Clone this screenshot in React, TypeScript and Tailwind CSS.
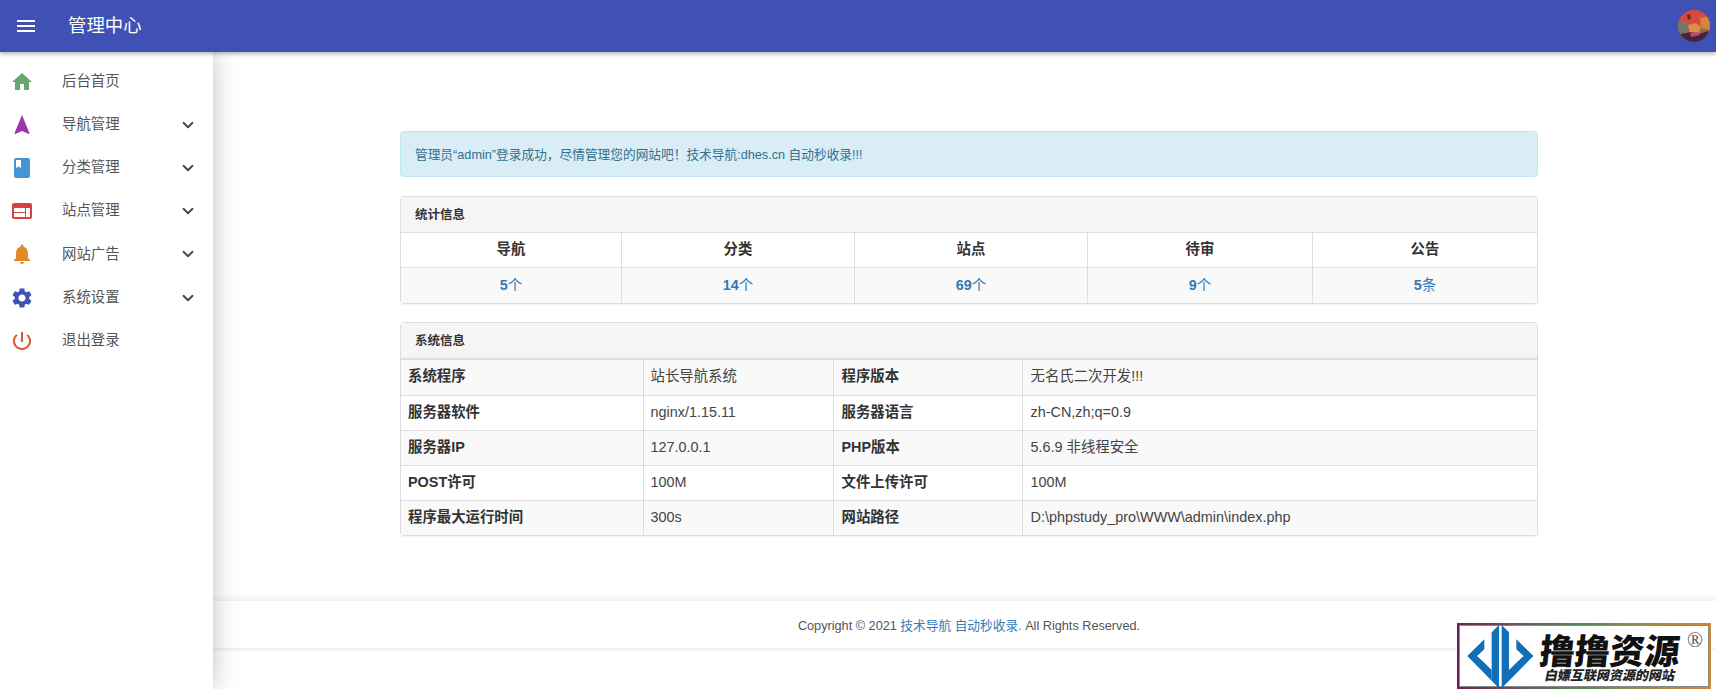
import { ChevronDown } from 'lucide-react';

const fontStack = "font-['Liberation_Sans','Noto_Sans_CJK_SC',sans-serif]";

const MdIcon = ({ d, color }: { d: string; color: string }) => (
  <svg viewBox="0 0 24 24" className="w-6 h-6" fill={color}>
    <path d={d} />
  </svg>
);

const navItems = [
  { label: '后台首页', color: '#66a86c', d: 'M10 20v-6h4v6h5v-8h3L12 3 2 12h3v8z' },
  { label: '导航管理', color: '#9c36ac', more: true, d: 'M12 2L4.5 20.29l.71.71L12 18l6.79 3 .71-.71z' },
  {
    label: '分类管理',
    color: '#4396d6',
    more: true,
    d: 'M18 2H6c-1.1 0-2 .9-2 2v16c0 1.1.9 2 2 2h12c1.1 0 2-.9 2-2V4c0-1.1-.9-2-2-2zM6 4h5v8l-2.5-1.5L6 12V4z',
  },
  {
    label: '站点管理',
    color: '#db3f3f',
    more: true,
    d: 'M20 4H4c-1.1 0-1.99.9-1.99 2L2 18c0 1.1.9 2 2 2h16c1.1 0 2-.9 2-2V6c0-1.1-.9-2-2-2zm-5 14H4v-4h11v4zm0-5H4V9h11v4zm5 5h-4V9h4v9z',
  },
  {
    label: '网站广告',
    color: '#e38a24',
    more: true,
    d: 'M12 22c1.1 0 2-.9 2-2h-4c0 1.1.89 2 2 2zm6-6v-5c0-3.07-1.64-5.64-4.5-6.32V4c0-.83-.67-1.5-1.5-1.5s-1.5.67-1.5 1.5v.68C7.63 5.36 6 7.92 6 11v5l-2 2v1h16v-1l-2-2z',
  },
  {
    label: '系统设置',
    color: '#3f51b5',
    more: true,
    d: 'M19.14 12.94c.04-.3.06-.61.06-.94 0-.32-.02-.64-.07-.94l2.03-1.58c.18-.14.23-.41.12-.61l-1.92-3.32c-.12-.22-.37-.29-.59-.22l-2.39.96c-.5-.38-1.03-.7-1.62-.94l-.36-2.54c-.04-.24-.24-.41-.48-.41h-3.84c-.24 0-.43.17-.47.41l-.36 2.54c-.59.24-1.13.57-1.62.94l-2.39-.96c-.22-.08-.47 0-.59.22L2.74 8.87c-.12.21-.08.47.12.61l2.03 1.58c-.05.3-.09.63-.09.94s.02.64.07.94l-2.03 1.58c-.18.14-.23.41-.12.61l1.92 3.32c.12.22.37.29.59.22l2.39-.96c.5.38 1.03.7 1.62.94l.36 2.54c.05.24.24.41.48.41h3.84c.24 0 .44-.17.47-.41l.36-2.54c.59-.24 1.13-.56 1.62-.94l2.39.96c.22.08.47 0 .59-.22l1.92-3.32c.12-.22.07-.47-.12-.61l-2.01-1.58zM12 15.6c-1.98 0-3.6-1.62-3.6-3.6s1.62-3.6 3.6-3.6 3.6 1.62 3.6 3.6-1.62 3.6-3.6 3.6z',
  },
  {
    label: '退出登录',
    color: '#e2512b',
    d: 'M13 3h-2v10h2V3zm4.83 2.17l-1.42 1.42C17.99 7.86 19 9.81 19 12c0 3.87-3.13 7-7 7s-7-3.13-7-7c0-2.19 1.01-4.14 2.58-5.42L6.17 5.17C4.23 6.82 3 9.26 3 12c0 4.97 4.03 9 9 9s9-4.03 9-9c0-2.74-1.23-5.18-3.17-6.83z',
  },
];

const stats = [
  { title: '导航', num: '5', unit: '个', width: 'w-[221px]' },
  { title: '分类', num: '14', unit: '个', width: 'w-[233px]' },
  { title: '站点', num: '69', unit: '个', width: 'w-[233px]' },
  { title: '待审', num: '9', unit: '个', width: 'w-[225px]' },
  { title: '公告', num: '5', unit: '条', width: 'w-[225px]' },
];

const sysRows = [
  ['系统程序', '站长导航系统', '程序版本', '无名氏二次开发!!!'],
  ['服务器软件', 'nginx/1.15.11', '服务器语言', 'zh-CN,zh;q=0.9'],
  ['服务器IP', '127.0.0.1', 'PHP版本', '5.6.9 非线程安全'],
  ['POST许可', '100M', '文件上传许可', '100M'],
  ['程序最大运行时间', '300s', '网站路径', 'D:\\phpstudy_pro\\WWW\\admin\\index.php'],
];

const Avatar = () => (
  <svg viewBox="0 0 32 32" className="w-8 h-8">
    <defs>
      <clipPath id="avatar-clip">
        <circle cx="16" cy="16" r="16" />
      </clipPath>
    </defs>
    <g clipPath="url(#avatar-clip)">
      <rect width="32" height="32" fill="#8a6a55" />
      <rect width="32" height="15" fill="#d9483f" />
      <path d="M0 12h9l3 7-4 5-8-2z" fill="#77746a" />
      <path d="M10 15l8-2 5 4-2 6-9 1z" fill="#d98f45" />
      <path d="M22 8l10-2v14l-9-2z" fill="#d4863a" />
      <path d="M3 24l10-2 8 2 9-3v11H3z" fill="#46233f" />
      <path d="M12 23l8-1 2 3-9 2z" fill="#c04a70" />
      <path d="M9 5l3-1 1 5-3 1z" fill="#6b2430" />
    </g>
  </svg>
);

const Logo = () => (
  <div className="absolute left-[1457px] top-[623px] w-[254px] h-[66px] p-[2px] bg-gradient-to-r from-[#6e1f52] via-[#4f8a5a] to-[#d9862b]">
    <div className="relative w-full h-full bg-white border border-[#888888]">
      <span className="absolute left-[80px] top-[4px] text-[35px] leading-[38px] font-black text-[#111111] -skew-x-6 whitespace-nowrap font-['Noto_Sans_CJK_SC',sans-serif]">
        撸撸资源
      </span>
      <span className="absolute right-[5px] top-[4px] text-[21px] leading-[20px] text-[#555555] font-['Liberation_Serif',serif]">
        ®
      </span>
      <span className="absolute left-[85px] top-[41px] text-[13px] leading-[16px] font-black -skew-x-12 text-[#222222] whitespace-nowrap font-['Noto_Sans_CJK_SC',sans-serif]">
        白嫖互联网资源的网站
      </span>
    </div>
    {/* diamond mark */}
    <svg viewBox="0 0 270 207" className="absolute left-[-2px] top-[-3px] w-[90px] h-[69px]" fill="#0f6fb8">
      <path d="M132 15L110 37V182L132 205z" />
      <path d="M140 15L162 37V182L140 205z" />
      <path d="M88 58L37 108L110 182V150L88 128L66 108L88 88z" />
      <path d="M184 58L235 108L162 182V150L184 128L206 108L184 88z" />
    </svg>
  </div>
);

export default function App() {
  return (
    <div className={`relative h-[689px] w-[1716px] overflow-hidden bg-white ${fontStack}`}>
      {/* Top bar */}
      <header className="relative z-20 h-[52px] bg-[#3f51b5] flex items-center shadow-[0_2px_4px_rgba(0,0,0,0.3)]">
        <svg viewBox="0 0 24 24" className="w-6 h-6 ml-[14px]" fill="#ffffff">
          <path d="M3 18h18v-2H3v2zm0-5h18v-2H3v2zm0-7v2h18V6H3z" />
        </svg>
        <span className="ml-[30px] text-[18.4px] text-white">管理中心</span>
        <div className="ml-auto mr-[6px] h-8">
          <Avatar />
        </div>
      </header>

      <div className="flex h-[637px]">
        {/* Sidebar */}
        <aside className="relative z-10 w-[213px] shrink-0 pt-2 bg-white shadow-[0_0_24px_rgba(0,0,0,0.25)]">
          {navItems.map((item) => (
            <div key={item.label} className="flex items-center h-[43.2px]">
              <div className="w-[62px] pl-[10px]">
                <MdIcon d={item.d} color={item.color} />
              </div>
              <span className="text-[14.4px] text-[#555555]">{item.label}</span>
              {item.more && <ChevronDown className="ml-auto mr-[16px] w-[18px] h-[18px] text-[#444444]" strokeWidth={2.4} />}
            </div>
          ))}
        </aside>

        {/* Main */}
        <main className="flex-1 min-w-0">
          <div className="ml-[187px] w-[1138px] pt-[79px] h-[549px]">
            <div className="h-[46px] flex items-center pt-[4px] px-[14px] rounded bg-[#d9edf7] border border-[#bce8f1] text-[12.7px] text-[#31708f]">
              管理员“admin”登录成功，尽情管理您的网站吧！技术导航:dhes.cn 自动秒收录!!!
            </div>

            <section className="mt-[19px] rounded border border-[#dddddd] shadow-[0_1px_1px_rgba(0,0,0,0.05)] overflow-hidden">
              <h3 className="h-[36px] flex items-center pt-[2px] px-[14px] bg-[#f5f5f5] border-b border-[#dddddd] text-[12.5px] font-bold text-[#333333]">
                统计信息
              </h3>
              <div className="flex border-b border-[#dddddd]">
                {stats.map((s) => (
                  <div
                    key={s.title}
                    className={`${s.width} last:flex-1 h-[34px] flex items-center justify-center border-r last:border-r-0 border-[#dddddd] text-[14.4px] font-bold text-[#333333]`}
                  >
                    {s.title}
                  </div>
                ))}
              </div>
              <div className="flex bg-[#f9f9f9]">
                {stats.map((s) => (
                  <div
                    key={s.title}
                    className={`${s.width} last:flex-1 h-[35px] flex items-center justify-center border-r last:border-r-0 border-[#dddddd] text-[14.4px] text-[#337ab7]`}
                  >
                    <b>{s.num}</b>
                    {s.unit}
                  </div>
                ))}
              </div>
            </section>

            <section className="mt-[18px] rounded border border-[#dddddd] shadow-[0_1px_1px_rgba(0,0,0,0.05)] overflow-hidden">
              <h3 className="h-[37px] flex items-center pt-[2px] px-[14px] bg-[#f5f5f5] border-b-2 border-[#dddddd] text-[12.5px] font-bold text-[#333333]">
                系统信息
              </h3>
              <table className="w-full table-fixed border-collapse text-[14.4px] text-[#444444]">
                <colgroup>
                  <col className="w-[242px]" />
                  <col className="w-[190px]" />
                  <col className="w-[189px]" />
                  <col />
                </colgroup>
                <tbody>
                  {sysRows.map((row) => (
                    <tr key={row[0]} className="h-[35px] border-b last:border-b-0 border-[#dddddd] odd:bg-[#f9f9f9]">
                      <td className="pl-[7px] font-bold text-[#333333] border-r border-[#dddddd]">{row[0]}</td>
                      <td className="pl-[7px] border-r border-[#dddddd]">{row[1]}</td>
                      <td className="pl-[8px] font-bold text-[#333333] border-r border-[#dddddd]">{row[2]}</td>
                      <td className="pl-[8px]">{row[3]}</td>
                    </tr>
                  ))}
                </tbody>
              </table>
            </section>
          </div>

          <footer className="h-[47px] pt-[5px] flex items-center justify-center text-[12.7px] text-[#555555] shadow-[0_-3px_5px_rgba(0,0,0,0.07),0_2px_3px_rgba(0,0,0,0.07)]">
            <span className="ml-[9px]">
              Copyright © 2021 <span className="text-[#337ab7]">技术导航 自动秒收录.</span> All Rights Reserved.
            </span>
          </footer>
        </main>
      </div>

      <Logo />
    </div>
  );
}
